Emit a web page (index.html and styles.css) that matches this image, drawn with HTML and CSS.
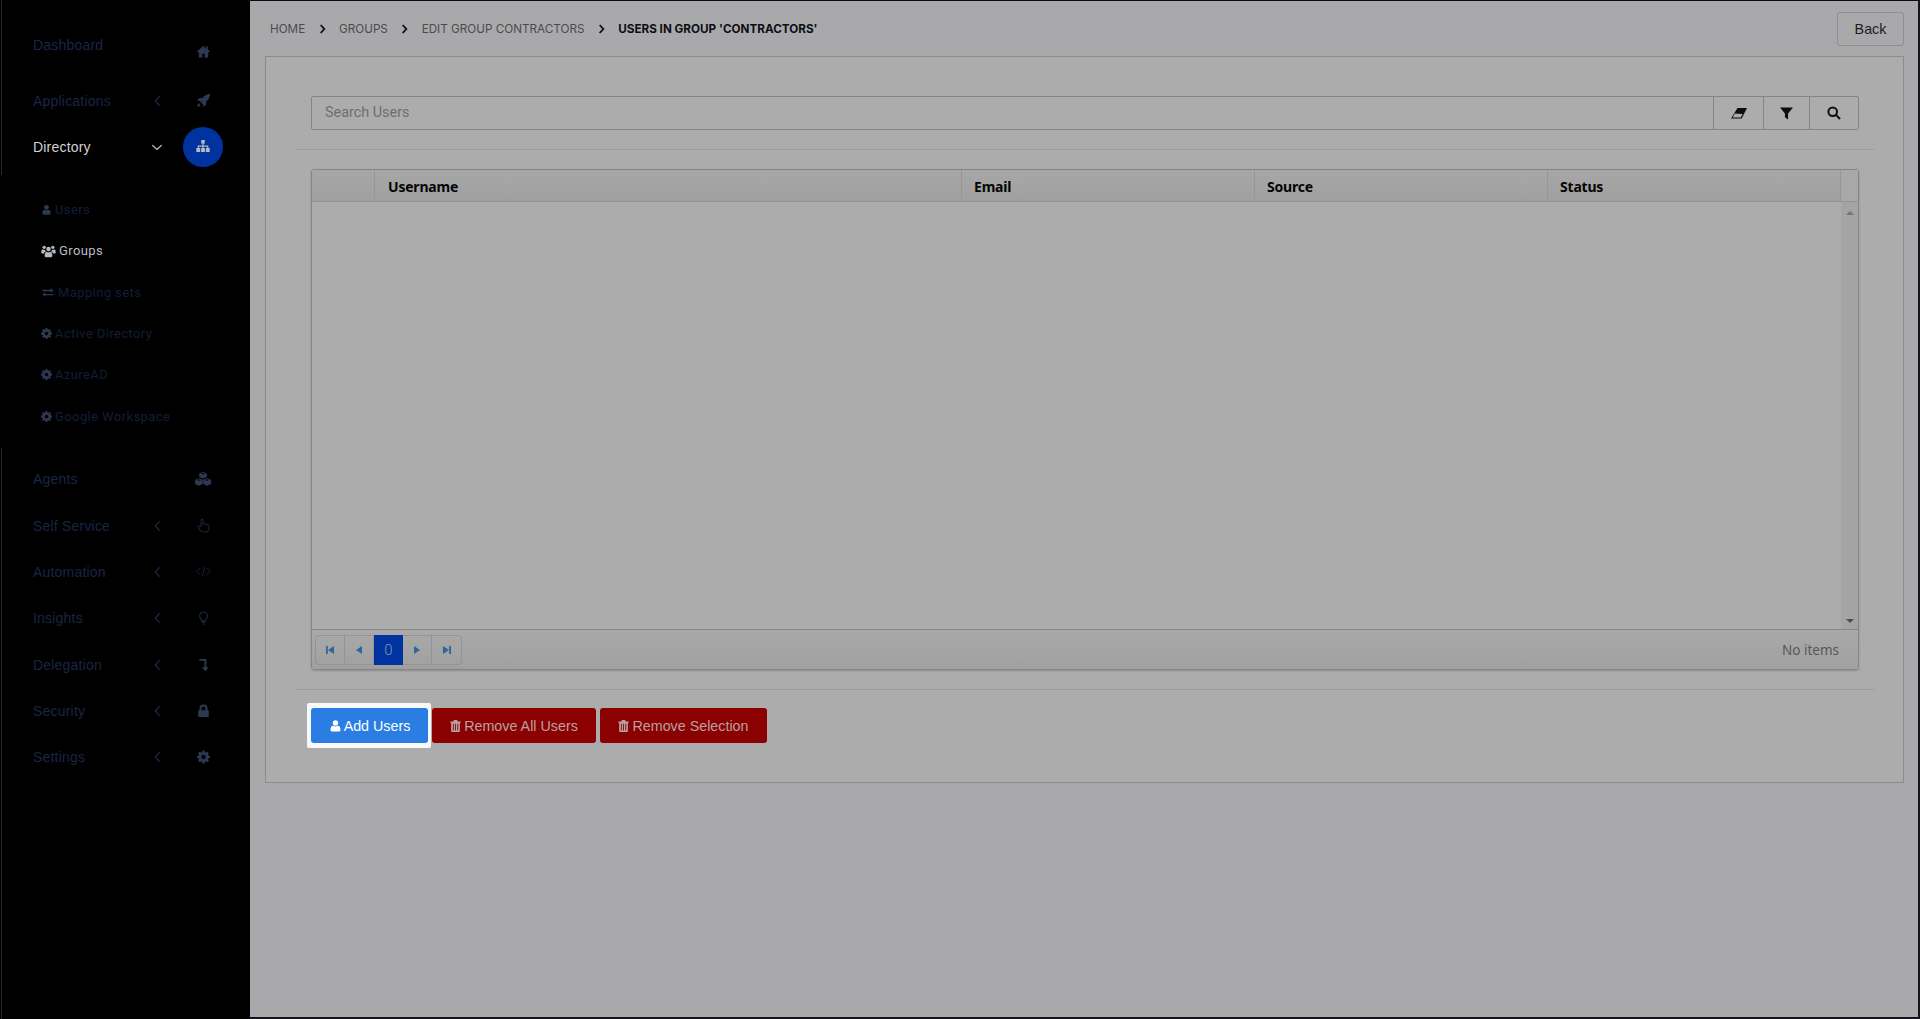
FILE: index.html
```html
<!DOCTYPE html>
<html lang="en">
<head>
<meta charset="utf-8">
<title>Users in group 'Contractors'</title>
<link rel="stylesheet" href="styles.css">
</head>
<body>
<svg class="defs" aria-hidden="true">
  <symbol id="i-home" viewBox="0 0 16 16"><path d="M8 1.800 1 8l.9 1L3 8.100V14.500h3.700v-4h2.600v4H13V8.100l1.100.9.9-1-2.400-2.100V2.500h-1.800v2.800z"/></symbol>
  <symbol id="i-rocket" viewBox="0 0 16 16"><path d="M15 1c-3.600.2-6 1.600-8 4.200H3.600L1 8l3 .6L7.400 12l.6 3 2.800-2.600V9c2.600-2 4-4.400 4.200-8zM3 11c-1 .7-1.600 2-1.700 3.700 1.700-.1 3-.7 3.700-1.700z"/></symbol>
  <symbol id="i-sitemap" viewBox="0 0 16 16"><path d="M6.200 1h3.600v3.400H8.600v2.100h4.700v2.600h1.400v3.900H10.800V9.100h1.300V7.700H8.600v1.400h1.300v3.900H6.100V9.100h1.300V7.700H3.900v1.400h1.300v3.900H1.300V9.100h1.400V6.500h4.700V4.400H6.200z"/></symbol>
  <symbol id="i-user" viewBox="0 0 16 16"><circle cx="8" cy="4.800" r="3.400"/><path d="M2 14.500c-.6-4 1-6.300 3.400-6.300 1.500 1.200 3.700 1.200 5.200 0 2.400 0 4 2.300 3.400 6.300-.3.700-1 1-1.800 1H3.800c-.8 0-1.500-.3-1.800-1z"/></symbol>
  <symbol id="i-users" viewBox="0 0 18 16"><circle cx="9" cy="5.600" r="2.700"/><circle cx="3.800" cy="3.600" r="2"/><circle cx="14.200" cy="3.600" r="2"/><path d="M4.500 14.500c-.5-3.600.9-5.700 2.300-5.700 1.400 1 3 1 4.400 0 1.400 0 2.800 2.100 2.300 5.700-.2.600-.8 1-1.400 1H5.900c-.6 0-1.200-.4-1.400-1zM.3 10c0-2 .6-4 1.700-4 1 .8 2 .9 3.100.6-.1.900.1 1.400.6 1.900-1 .6-1.900 1.300-2.200 2.500H1.200c-.5 0-.9-.4-.9-1zM17.700 10c0-2-.6-4-1.700-4-1 .8-2 .9-3.100.6.100.9-.1 1.400-.6 1.900 1 .6 1.900 1.300 2.200 2.500h2.300c.5 0 .9-.4.900-1z"/></symbol>
  <symbol id="i-exchange" viewBox="0 0 16 16"><path d="M0 4h12V1.500L16 5l-4 3.500V6H0zM16 10H4V7.500L0 11l4 3.500V12h12z"/></symbol>
  <symbol id="i-cog" viewBox="0 0 16 16"><path fill-rule="evenodd" d="M6.700 0h2.600l.4 2.100 1.200.5 1.800-1.200 1.900 1.900-1.200 1.800.5 1.200 2.100.4v2.600l-2.100.4-.5 1.200 1.200 1.800-1.900 1.900-1.800-1.200-1.200.5-.4 2.100H6.700l-.4-2.100-1.200-.5-1.800 1.200-1.900-1.900 1.200-1.800-.5-1.200L0 9.300V6.700l2.100-.4.500-1.200L1.400 3.300l1.900-1.900 1.800 1.200 1.200-.5zM8 5.300a2.700 2.700 0 1 0 0 5.400 2.700 2.700 0 0 0 0-5.400z"/></symbol>
  <symbol id="i-cubes" viewBox="0 0 18 14"><path fill-rule="evenodd" d="M9 0l3.800 1.400v3.700L9 6.600 5.200 5.100V1.400zM9 .9 6.900 1.700 9 2.500l2.100-.8zM5 6.300l3.800 1.400v4.400L5 13.800 1 12.100V7.700zM5 7.200 2.900 8 5 8.800 7.100 8zM13 6.300l4 1.400v4.400l-4 1.700-3.800-1.700V7.700zM13 7.200 10.900 8l2.100.8L15.100 8z"/></symbol>
  <symbol id="i-hand" viewBox="0 0 16 16"><path fill="none" stroke="currentColor" stroke-width="1.100" d="M5.500 8V2.400c0-1.500 2-1.500 2 0V6l4.500 1c1.400.4 2 1.200 2 2.600 0 2.700-.6 5.400-3.400 5.400H7.400c-1.400 0-2-1-2.900-2.100L2.300 10.400c-.9-1.400.9-2.700 2-1.400z"/></symbol>
  <symbol id="i-code" viewBox="0 0 18 16"><path fill="none" stroke="currentColor" stroke-width="1.100" d="M5 4 1 8l4 4M13 4l4 4-4 4M10.500 2.500l-3 11"/></symbol>
  <symbol id="i-bulb" viewBox="0 0 16 16"><path fill="none" stroke="currentColor" stroke-width="1.200" d="M5.800 10.500c0-1.800-2-2.800-2-5.200a4.200 4.200 0 0 1 8.400 0c0 2.400-2 3.400-2 5.200z"/><path d="M6 11.500h4v1.300H6zM6.600 13.500h2.800L8 15.500z"/></symbol>
  <symbol id="i-level" viewBox="0 0 16 16"><path d="M3.500 2h7.500v9h2.500l-3.500 4.500L6.500 11H9V4H3.500z"/></symbol>
  <symbol id="i-lock" viewBox="0 0 16 16"><path fill-rule="evenodd" d="M3 7V5a5 5 0 0 1 10 0v2h.5c.6 0 1 .4 1 1v6.500c0 .6-.4 1-1 1h-11c-.6 0-1-.4-1-1V8c0-.6.4-1 1-1zm2.500 0h5V5a2.500 2.500 0 0 0-5 0z"/></symbol>
  <symbol id="i-left" viewBox="0 0 8 14"><path fill="none" stroke="currentColor" stroke-width="1.200" d="M6.500 1.500 1.500 7l5 5.500"/></symbol>
  <symbol id="i-down" viewBox="0 0 14 8"><path fill="none" stroke="currentColor" stroke-width="1.500" d="M1.500 1.200 7 6.300l5.500-5.100"/></symbol>
  <symbol id="i-sep" viewBox="0 0 8 12"><path fill="none" stroke="currentColor" stroke-width="2.200" d="M1.800 1.200 6.200 6l-4.400 4.800"/></symbol>
  <symbol id="i-eraser" viewBox="0 0 16 11"><path fill-rule="evenodd" d="M6.500 0H16l-5.300 10.500H0zM3.800 5.600 1.600 9.500h8.200l1.800-3.400z"/></symbol>
  <symbol id="i-filter" viewBox="0 0 14 14"><path d="M0 .5h14L8.700 7v6.500L5.300 11V7z"/></symbol>
  <symbol id="i-search" viewBox="0 0 14 14"><path fill="none" stroke="currentColor" stroke-width="2" d="M9.400 9.400 13 13M10 5.800a4.300 4.300 0 1 1-8.600 0 4.300 4.300 0 0 1 8.600 0z"/></symbol>
  <symbol id="i-trash" viewBox="0 0 14 16"><path fill-rule="evenodd" d="M5 0h4l1 2h4v1.500h-1.200V15c0 .6-.4 1-1 1H2.200c-.6 0-1-.4-1-1V3.500H0V2h4zM3.500 5v9h1.200V5zm3 0v9h1.200V5zm3 0v9h1.200V5z"/></symbol>
  <symbol id="i-first" viewBox="0 0 10 10"><path d="M1 1h1.800v8H1zM9 1v8L3 5z"/></symbol>
  <symbol id="i-prev" viewBox="0 0 10 10"><path d="M8 1v8L2 5z"/></symbol>
  <symbol id="i-next" viewBox="0 0 10 10"><path d="M2 1v8l6-4z"/></symbol>
  <symbol id="i-last" viewBox="0 0 10 10"><path d="M9 1H7.200v8H9zM1 1v8l6-4z"/></symbol>
</svg>

<aside class="sidebar">
  <nav class="nav">
    <a class="nav-row nav-row-dash"><span class="nav-label">Dashboard</span><span class="nav-caret"></span><span class="nav-icon"><svg class="ico ico-15"><use href="#i-home"/></svg></span></a>
    <a class="nav-row"><span class="nav-label">Applications</span><span class="nav-caret"><svg class="ico caret"><use href="#i-left"/></svg></span><span class="nav-icon"><svg class="ico ico-14"><use href="#i-rocket"/></svg></span></a>
    <a class="nav-row is-open"><span class="nav-label">Directory</span><span class="nav-caret"><svg class="ico caret-down"><use href="#i-down"/></svg></span><span class="nav-icon nav-badge"><svg class="ico ico-16"><use href="#i-sitemap"/></svg></span></a>
    <ul class="subnav">
      <li class="sub-row"><svg class="ico sub-ico"><use href="#i-user"/></svg><span>Users</span></li>
      <li class="sub-row is-current"><svg class="ico sub-ico-w"><use href="#i-users"/></svg><span>Groups</span></li>
      <li class="sub-row"><svg class="ico sub-ico-x"><use href="#i-exchange"/></svg><span>Mapping sets</span></li>
      <li class="sub-row"><svg class="ico sub-ico"><use href="#i-cog"/></svg><span>Active Directory</span></li>
      <li class="sub-row"><svg class="ico sub-ico"><use href="#i-cog"/></svg><span>AzureAD</span></li>
      <li class="sub-row"><svg class="ico sub-ico"><use href="#i-cog"/></svg><span>Google Workspace</span></li>
    </ul>
    <a class="nav-row"><span class="nav-label">Agents</span><span class="nav-caret"></span><span class="nav-icon"><svg class="ico ico-18"><use href="#i-cubes"/></svg></span></a>
    <a class="nav-row"><span class="nav-label">Self Service</span><span class="nav-caret"><svg class="ico caret"><use href="#i-left"/></svg></span><span class="nav-icon nav-icon-line"><svg class="ico ico-14"><use href="#i-hand"/></svg></span></a>
    <a class="nav-row"><span class="nav-label">Automation</span><span class="nav-caret"><svg class="ico caret"><use href="#i-left"/></svg></span><span class="nav-icon nav-icon-line"><svg class="ico ico-15"><use href="#i-code"/></svg></span></a>
    <a class="nav-row"><span class="nav-label">Insights</span><span class="nav-caret"><svg class="ico caret"><use href="#i-left"/></svg></span><span class="nav-icon nav-icon-line"><svg class="ico ico-14"><use href="#i-bulb"/></svg></span></a>
    <a class="nav-row"><span class="nav-label">Delegation</span><span class="nav-caret"><svg class="ico caret"><use href="#i-left"/></svg></span><span class="nav-icon"><svg class="ico ico-14"><use href="#i-level"/></svg></span></a>
    <a class="nav-row"><span class="nav-label">Security</span><span class="nav-caret"><svg class="ico caret"><use href="#i-left"/></svg></span><span class="nav-icon"><svg class="ico ico-12"><use href="#i-lock"/></svg></span></a>
    <a class="nav-row"><span class="nav-label">Settings</span><span class="nav-caret"><svg class="ico caret"><use href="#i-left"/></svg></span><span class="nav-icon"><svg class="ico ico-12"><use href="#i-cog"/></svg></span></a>
  </nav>
</aside>

<main class="main">
  <header class="topbar">
    <ol class="crumbs">
      <li class="crumb">HOME</li>
      <li class="crumb-sep"><svg class="ico crumb-ico"><use href="#i-sep"/></svg></li>
      <li class="crumb">GROUPS</li>
      <li class="crumb-sep"><svg class="ico crumb-ico"><use href="#i-sep"/></svg></li>
      <li class="crumb">EDIT GROUP CONTRACTORS</li>
      <li class="crumb-sep"><svg class="ico crumb-ico"><use href="#i-sep"/></svg></li>
      <li class="crumb crumb-current">USERS IN GROUP 'CONTRACTORS'</li>
    </ol>
    <button class="back-btn">Back</button>
  </header>

  <section class="panel">
    <div class="search-wrap">
      <div class="search">
        <div class="search-input">Search Users</div>
        <button class="search-btn sb-erase"><svg class="ico ico-eraser"><use href="#i-eraser"/></svg></button>
        <button class="search-btn sb-filter"><svg class="ico ico-filter"><use href="#i-filter"/></svg></button>
        <button class="search-btn sb-find"><svg class="ico ico-find"><use href="#i-search"/></svg></button>
      </div>
    </div>
    <hr class="rule">
    <div class="grid-wrap">
      <div class="grid">
        <div class="grid-head">
          <div class="th th-first"></div>
          <div class="th th-user">Username</div>
          <div class="th th-email">Email</div>
          <div class="th th-source">Source</div>
          <div class="th th-status">Status</div>
          <div class="th th-scroll"></div>
        </div>
        <div class="grid-body">
          <div class="grid-rows"></div>
          <div class="scrollbar"><span class="arrow-up"></span><span class="arrow-down"></span></div>
        </div>
        <div class="grid-foot">
          <div class="pager">
            <span class="pg"><svg class="ico pg-ico"><use href="#i-first"/></svg></span>
            <span class="pg"><svg class="ico pg-ico"><use href="#i-prev"/></svg></span>
            <span class="pg pg-active">0</span>
            <span class="pg"><svg class="ico pg-ico"><use href="#i-next"/></svg></span>
            <span class="pg"><svg class="ico pg-ico"><use href="#i-last"/></svg></span>
          </div>
          <span class="pager-info">No items</span>
        </div>
      </div>
    </div>
    <hr class="rule rule-tight">
    <div class="actions">
      <span class="add-ring"><button class="btn btn-add"><svg class="ico btn-ico"><use href="#i-user"/></svg>Add Users</button></span>
      <button class="btn btn-del btn-del-all"><svg class="ico btn-ico-t"><use href="#i-trash"/></svg>Remove All Users</button>
      <button class="btn btn-del btn-del-sel"><svg class="ico btn-ico-t"><use href="#i-trash"/></svg>Remove Selection</button>
    </div>
  </section>
</main>
</body>
</html>
```
FILE: styles.css
```css
* { box-sizing: border-box; }
html, body { height: 100%; }
body {
  margin: 0;
  display: flex;
  overflow: hidden;
  background: #a9a9ab;
  font-family: "Liberation Sans", Arial, sans-serif;
  font-size: 14px;
}
.defs { display: none; }
.ico { display: block; fill: currentColor; flex: none; }

/* sidebar */
.sidebar {
  width: 250px;
  flex: none;
  background: #000;
  position: relative;
}
.sidebar::before, .sidebar::after {
  content: "";
  position: absolute;
  left: 1px;
  width: 1px;
  background: #26262c;
}
.sidebar::before { top: 0; height: 175px; }
.sidebar::after { top: 448px; bottom: 0; }
.nav { padding-top: 31.4px; }
.nav-row {
  display: flex;
  align-items: center;
  height: 46.3px;
  padding-left: 33px;
  color: #1a2545;
  letter-spacing: .2px;
}
.nav-label { width: 116px; }
.nav-caret { width: 16px; display: flex; justify-content: center; color: #2a3350; }
.nav-icon {
  width: 40px;
  height: 40px;
  margin-left: 18px;
  display: flex;
  align-items: center;
  justify-content: center;
  color: #2d3852;
}
.nav-icon-line { color: #1d2744; }
.nav-row-dash .nav-label { position: relative; top: -10px; }
.nav-row-dash .nav-icon { position: relative; top: -3px; }
.is-open { color: #d2d2d2; }
.is-open .nav-caret { color: #c8c8c8; }
.nav-badge { background: #0033a0; border-radius: 50%; color: #b4b9c4; }
.caret { width: 7px; height: 12px; }
.caret-down { width: 12px; height: 7px; }
.ico-12 { width: 13px; height: 14px; }
.ico-14 { width: 15px; height: 15px; }
.ico-15 { width: 15px; height: 15px; }
.ico-16 { width: 16px; height: 16px; }
.ico-18 { width: 18px; height: 14px; }

.subnav { list-style: none; margin: 0; padding: 18.6px 0 19.6px 41px; }
.sub-row {
  display: flex;
  align-items: center;
  gap: 3px;
  height: 41.3px;
  color: #141d38;
  font-family: Roboto, sans-serif;
  font-size: 13px;
  letter-spacing: .4px;
}
.sub-row .ico { color: #2d3852; }
.is-current { color: #b8bcc4; }
.is-current .ico { color: #b4b8c0; }
.sub-ico { width: 11px; height: 11px; }
.sub-ico-w { width: 15px; height: 14px; }
.sub-ico-x { width: 14px; height: 11px; }

/* main */
.main {
  flex: 1;
  min-width: 0;
  display: flex;
  flex-direction: column;
  border-top: 1px solid #0b0b0b;
  border-right: 2px solid #14141c;
  border-bottom: 2px solid #14141c;
}
.topbar {
  height: 55px;
  flex: none;
  display: flex;
  align-items: center;
  justify-content: space-between;
  padding: 0 14px 0 20px;
}
.crumbs {
  list-style: none;
  margin: 0;
  padding: 0;
  display: flex;
  align-items: center;
  color: #4b4b4e;
  font-family: Inter, sans-serif;
  font-size: 11.7px;
}
.crumb-sep { width: 33.8px; display: flex; justify-content: center; color: #111; }
.crumb-ico { width: 7px; height: 10px; }
.crumb-current { color: #0d0d14; font-weight: 700; }
.back-btn {
  width: 67px;
  height: 34px;
  padding: 0;
  border: 1px solid #8f8f90;
  border-radius: 3px;
  background: #a9a9ab;
  color: #1c1c1e;
  font: 14.3px "Liberation Sans", Arial, sans-serif;
}
.panel {
  height: 727px;
  margin: 0 14px 0 15px;
  padding: 39px 29px 0 30px;
  border: 1px solid #8c8c8d;
  background: #acacac;
}
.search-wrap { padding: 0 15px; }
.search {
  display: flex;
  height: 34px;
  border: 1px solid #858586;
  border-radius: 2px;
}
.search-input {
  flex: 1;
  padding-left: 13px;
  line-height: 31px;
  color: #6e6e70;
  font-family: Roboto, sans-serif;
  font-size: 14.4px;
}
.search-btn {
  display: flex;
  align-items: center;
  justify-content: center;
  padding: 0;
  border: 0;
  border-left: 1px solid #858586;
  background: transparent;
  color: #0d0d0d;
}
.sb-erase { width: 50px; }
.sb-filter { width: 46px; }
.sb-find { width: 49px; }
.ico-eraser { width: 16px; height: 11px; }
.ico-filter { width: 13px; height: 13px; }
.ico-find { width: 14px; height: 14px; }
.rule { margin: 19px 0; height: 1px; border: 0; background: #9c9c9c; }
.rule-tight { margin-bottom: 18px; }
.grid-wrap { padding: 0 15px; }
.grid {
  height: 501px;
  display: flex;
  flex-direction: column;
  border: 1px solid #858586;
  border-radius: 3px;
  box-shadow: 0 1px 2px #8e8e8e;
}
.grid-head {
  flex: none;
  height: 32px;
  display: flex;
  background: linear-gradient(#a7a7a7, #a0a0a0);
  border-bottom: 1px solid #939393;
  color: #050505;
  font-family: "Noto Sans", sans-serif;
  font-size: 14px;
  font-weight: 700;
  font-stretch: condensed;
  letter-spacing: -.2px;
}
.th {
  line-height: 33px;
  padding-left: 12px;
  border-right: 1px solid #979797;
}
.th-first { width: 63px; }
.th-user { width: 587px; padding-left: 13px; }
.th-email { width: 293px; }
.th-source { width: 293px; }
.th-status { width: 293px; }
.th-scroll { flex: 1; border-right: 0; padding: 0; background: #a8a8a8; }
.grid-body { flex: 1; display: flex; min-height: 0; }
.grid-rows { flex: 1; }
.scrollbar {
  width: 17px;
  display: flex;
  flex-direction: column;
  justify-content: space-between;
  align-items: center;
  padding: 9px 0 6px;
  background: #a4a4a4;
}
.arrow-up, .arrow-down { width: 0; height: 0; border-left: 4px solid transparent; border-right: 4px solid transparent; }
.arrow-up { border-bottom: 4px solid #757575; }
.arrow-down { border-top: 4px solid #4d4d4d; }
.grid-foot {
  flex: none;
  height: 40px;
  display: flex;
  align-items: center;
  justify-content: space-between;
  padding: 0 19px 0 3px;
  border-top: 1px solid #858586;
  background: linear-gradient(#a9a9a9, #a0a0a0);
}
.pager {
  display: flex;
  height: 30px;
  border: 1px solid #939393;
  border-radius: 4px;
}
.pg {
  width: 29px;
  display: flex;
  align-items: center;
  justify-content: center;
  border-right: 1px solid #939393;
  color: #2e6697;
}
.pg:last-child { border-right: 0; }
.pg-ico { width: 10px; height: 10px; }
.pg-active {
  width: 29px;
  margin: -1px 0;
  border-right: 0;
  background: #0033a0;
  color: #8492ba;
  font-family: Roboto, sans-serif;
  font-size: 15px;
  font-weight: 300;
}
.pager-info { color: #58585a; font-family: "Noto Sans", sans-serif; font-size: 13.5px; }
.actions { display: flex; gap: 4px; padding: 0 15px; }
.btn {
  height: 35px;
  display: flex;
  align-items: center;
  justify-content: center;
  gap: 2px;
  padding: 0;
  border: 0;
  border-radius: 3px;
  font: 14.3px "Liberation Sans", Arial, sans-serif;
}
.add-ring {
  display: flex;
  padding: 5px 3px 5px 4px;
  margin: -5px -3px -5px -4px;
  background: #f8f8f8;
  border-radius: 2px;
}
.btn-add { width: 117px; background: #2a7ee3; color: #fff; }
.btn-del { background: #8b0000; color: #b9a1a3; }
.btn-del-all { width: 164px; }
.btn-del-sel { width: 167px; }
.btn-ico { width: 13px; height: 13px; }
.btn-ico-t { width: 11px; height: 12px; margin-right: 1px; }
```
